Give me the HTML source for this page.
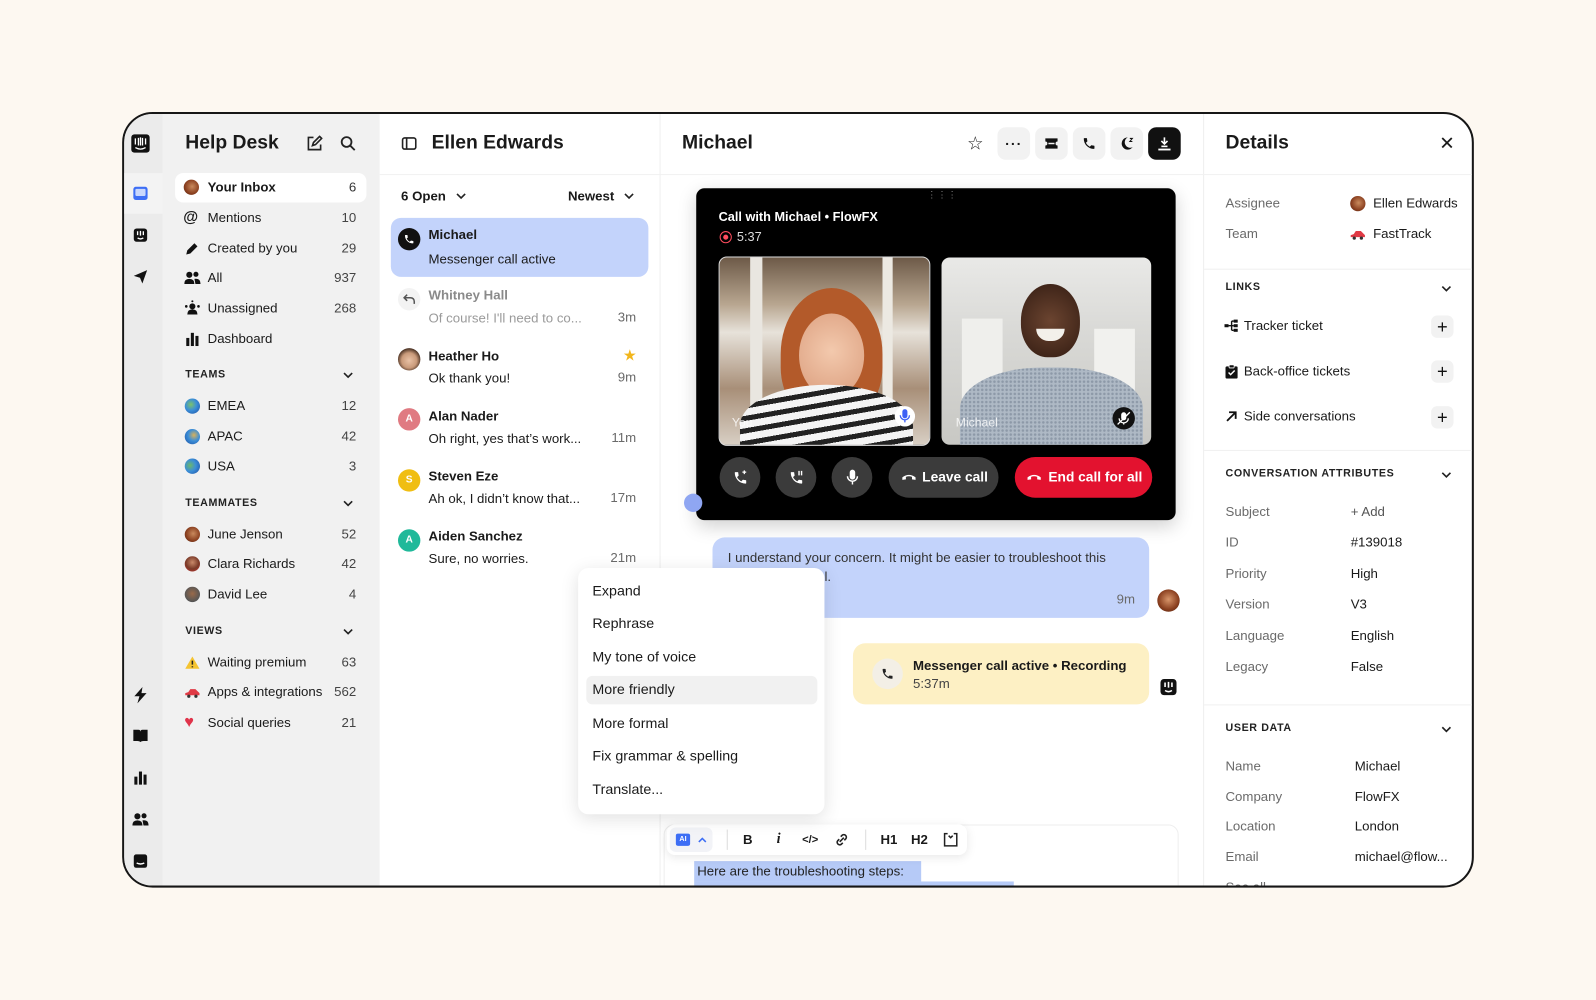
<!DOCTYPE html>
<html><head><meta charset="utf-8">
<style>
*{margin:0;padding:0;box-sizing:border-box}
html,body{width:1596px;height:1000px;overflow:hidden;background:#fdf8f1}
body{font-family:"Liberation Sans",sans-serif;color:#1a1a1a}
#scale{position:absolute;left:0;top:0;width:1568px;height:982px;transform:scale(1.01786);transform-origin:0 0}
#frame{position:absolute;left:120px;top:110px;width:1328px;height:762px;border:2px solid #161616;border-radius:30px;overflow:hidden;background:#fff}
#in{position:absolute;left:-122px;top:-112px;width:1568px;height:982px}
.a{position:absolute}
.t{position:absolute;transform:translateY(-50%);line-height:18px;white-space:nowrap;font-size:13px}
.r{text-align:right}
.b{font-weight:bold}
.g{color:#6a6a6a}
.h{font-size:19px;font-weight:bold}
.sec{font-size:10.5px;font-weight:bold;letter-spacing:.6px;color:#222}
.ic{position:absolute;transform:translate(-50%,-50%)}
.av{position:absolute;border-radius:50%;transform:translate(-50%,-50%)}
.btn{position:absolute;width:32px;height:32px;border-radius:8px;background:#f2f2f2;transform:translate(-50%,-50%);display:flex;align-items:center;justify-content:center}
.circ{position:absolute;width:40px;height:40px;border-radius:50%;background:#3b3b3b;transform:translate(-50%,-50%);display:flex;align-items:center;justify-content:center}
.plus{position:absolute;width:22px;height:22px;border-radius:6px;background:#f2f2f2;transform:translate(-50%,-50%);text-align:center;line-height:22px;font-size:18px;color:#111}
.lt{position:absolute;transform:translate(-50%,-50%);width:22px;height:22px;border-radius:50%;color:#fff;font-size:10px;font-weight:bold;text-align:center;line-height:22px}
</style></head><body>
<div id="scale">
<div id="frame"><div id="in">

<!-- columns -->
<div class="a" style="left:122px;top:112px;width:38px;height:770px;background:#ebebeb"></div>
<div class="a" style="left:122px;top:170px;width:38px;height:40px;background:#f3f3f3"></div>
<div class="a" style="left:160px;top:112px;width:213px;height:770px;background:#f1f1f1"></div>
<div class="a" style="left:648px;top:112px;width:1px;height:770px;background:#efefef"></div>
<div class="a" style="left:1182px;top:112px;width:1px;height:770px;background:#efefef"></div>
<div class="a" style="left:373px;top:171px;width:1075px;height:1px;background:#f1f1f1"></div>

<!-- rail -->
<svg class="ic" style="left:138px;top:141px" width="20" height="20" viewBox="0 0 20 20"><rect x="1" y="1" width="18" height="18" rx="3" fill="#111"/><path d="M5 5v6M8 4.5v7.5M10 4v8M12 4.5v7.5M15 5v6M5 14q5 3 10 0" stroke="#fff" stroke-width="1.3" fill="none"/></svg>
<svg class="ic" style="left:138px;top:190px" width="16" height="16" viewBox="0 0 16 16"><rect x="1" y="1.5" width="14" height="13" rx="2.5" fill="#3d6ef5"/><rect x="3" y="3.5" width="10" height="7" rx="1" fill="#c9d7fc"/></svg>
<svg class="ic" style="left:138px;top:231px" width="15" height="15" viewBox="0 0 16 16"><rect x="1" y="1" width="14" height="14" rx="3" fill="#111"/><path d="M5 4v4M8 3.5v5M11 4v4M5 11q3 2 6 0" stroke="#fff" stroke-width="1.4" fill="none"/></svg>
<svg class="ic" style="left:138px;top:272px" width="15" height="15" viewBox="0 0 16 16"><path d="M1 7L15 1 10 15 7.5 9z" fill="#111"/></svg>
<svg class="ic" style="left:138px;top:683px" width="14" height="16" viewBox="0 0 14 16"><path d="M9 0L1 9h5l-2 7 9-10H8z" fill="#111"/></svg>
<svg class="ic" style="left:138px;top:723px" width="16" height="14" viewBox="0 0 16 14"><path d="M1 1h5q2 0 2 2v10q-1-1-3-1H1zM15 1h-5q-2 0-2 2v10q1-1 3-1h4z" fill="#111"/></svg>
<svg class="ic" style="left:138px;top:764px" width="14" height="14" viewBox="0 0 14 14"><rect x="1" y="6" width="3" height="8" fill="#111"/><rect x="5.5" y="1" width="3" height="13" fill="#111"/><rect x="10" y="4" width="3" height="10" fill="#111"/></svg>
<svg class="ic" style="left:138px;top:805px" width="16" height="14" viewBox="0 0 16 14"><circle cx="5" cy="4" r="3" fill="#111"/><circle cx="11.5" cy="3.5" r="2.5" fill="#111"/><path d="M0 13q0-5 5-5t5 5zM10 8q6-1 6 5h-5z" fill="#111"/></svg>
<svg class="ic" style="left:138px;top:846px" width="15" height="15" viewBox="0 0 16 16"><rect x="1" y="1" width="14" height="14" rx="2.5" fill="#111"/><path d="M4 10q4 2 8 0" stroke="#fff" stroke-width="1.5" fill="none"/></svg>

<!-- sidebar -->
<div class="t h" style="left:182px;top:141px">Help Desk</div>
<svg class="ic" style="left:309px;top:141px" width="16" height="16" viewBox="0 0 16 16" fill="none" stroke="#222" stroke-width="1.6"><path d="M7 2H2v12h12V9"/><path d="M6 10l1-3 6-6 2 2-6 6z"/></svg>
<svg class="ic" style="left:342px;top:141px" width="16" height="16" viewBox="0 0 16 16" fill="none" stroke="#222" stroke-width="1.8"><circle cx="6.5" cy="6.5" r="4.8"/><path d="M10 10l4.5 4.5"/></svg>
<div class="a" style="left:172px;top:170px;width:188px;height:29px;background:#fff;border-radius:8px"></div>
<div class="av" style="left:188px;top:184px;width:15px;height:15px;background:radial-gradient(circle at 55% 45%,#c98a5d 0,#8a3f1f 60%,#4a2010 100%)"></div>
<div class="t b" style="left:204px;top:184px">Your Inbox</div><div class="t r" style="right:1218px;top:184px;color:#333">6</div>
<div class="t" style="left:180px;top:214px;font-size:15px;font-weight:bold">@</div><div class="t" style="left:204px;top:214px">Mentions</div><div class="t r" style="right:1218px;top:214px;color:#444">10</div>
<svg class="ic" style="left:189px;top:244px" width="14" height="14" viewBox="0 0 14 14"><path d="M1 13l1-4 7-7 3 3-7 7z" fill="#111"/></svg><div class="t" style="left:204px;top:244px">Created by you</div><div class="t r" style="right:1218px;top:244px;color:#444">29</div>
<svg class="ic" style="left:189px;top:273px" width="16" height="14" viewBox="0 0 16 14"><circle cx="5" cy="4" r="3" fill="#111"/><circle cx="11.5" cy="3.5" r="2.5" fill="#111"/><path d="M0 13q0-5 5-5t5 5zM10 8q6-1 6 5h-5z" fill="#111"/></svg><div class="t" style="left:204px;top:273px">All</div><div class="t r" style="right:1218px;top:273px;color:#444">937</div>
<svg class="ic" style="left:189px;top:303px" width="16" height="16" viewBox="0 0 16 16"><circle cx="8" cy="6" r="3" fill="#111"/><path d="M3 14q0-5 5-5t5 5z" fill="#111"/><circle cx="2" cy="6" r="1.3" fill="#111"/><circle cx="14" cy="6" r="1.3" fill="#111"/><circle cx="8" cy="1" r="1" fill="#111"/></svg><div class="t" style="left:204px;top:303px">Unassigned</div><div class="t r" style="right:1218px;top:303px;color:#444">268</div>
<svg class="ic" style="left:189px;top:333px" width="14" height="14" viewBox="0 0 14 14"><rect x="1" y="6" width="3" height="8" fill="#111"/><rect x="5.5" y="1" width="3" height="13" fill="#111"/><rect x="10" y="4" width="3" height="10" fill="#111"/></svg><div class="t" style="left:204px;top:333px">Dashboard</div>
<div class="t sec" style="left:182px;top:368px">TEAMS</div><svg class="ic" style="left:342px;top:369px" width="10" height="7" viewBox="0 0 10 7"><path d="M1 1l4 4 4-4" stroke="#222" stroke-width="1.6" fill="none"/></svg>
<div class="av" style="left:189px;top:399px;width:15px;height:15px;background:radial-gradient(circle at 40% 40%,#7cc36a 0,#3b8ed8 45%,#1d4fa0 100%)"></div><div class="t" style="left:204px;top:399px">EMEA</div><div class="t r" style="right:1218px;top:399px;color:#444">12</div>
<div class="av" style="left:189px;top:429px;width:15px;height:15px;background:radial-gradient(circle at 60% 40%,#d9b25a 0,#3b8ed8 45%,#1d4fa0 100%)"></div><div class="t" style="left:204px;top:429px">APAC</div><div class="t r" style="right:1218px;top:429px;color:#444">42</div>
<div class="av" style="left:189px;top:458px;width:15px;height:15px;background:radial-gradient(circle at 35% 45%,#6bb86a 0,#3b8ed8 45%,#1d4fa0 100%)"></div><div class="t" style="left:204px;top:458px">USA</div><div class="t r" style="right:1218px;top:458px;color:#444">3</div>
<div class="t sec" style="left:182px;top:494px">TEAMMATES</div><svg class="ic" style="left:342px;top:495px" width="10" height="7" viewBox="0 0 10 7"><path d="M1 1l4 4 4-4" stroke="#222" stroke-width="1.6" fill="none"/></svg>
<div class="av" style="left:189px;top:525px;width:15px;height:15px;background:radial-gradient(circle at 55% 45%,#c98a5d 0,#8a3f1f 60%,#4a2010 100%)"></div><div class="t" style="left:204px;top:525px">June Jenson</div><div class="t r" style="right:1218px;top:525px;color:#444">52</div>
<div class="av" style="left:189px;top:554px;width:15px;height:15px;background:radial-gradient(circle at 50% 40%,#c9896a 0,#7a3a28 55%,#c33 100%)"></div><div class="t" style="left:204px;top:554px">Clara Richards</div><div class="t r" style="right:1218px;top:554px;color:#444">42</div>
<div class="av" style="left:189px;top:584px;width:15px;height:15px;background:radial-gradient(circle at 50% 45%,#9a6a4a 0,#555 70%)"></div><div class="t" style="left:204px;top:584px">David Lee</div><div class="t r" style="right:1218px;top:584px;color:#444">4</div>
<div class="t sec" style="left:182px;top:620px">VIEWS</div><svg class="ic" style="left:342px;top:621px" width="10" height="7" viewBox="0 0 10 7"><path d="M1 1l4 4 4-4" stroke="#222" stroke-width="1.6" fill="none"/></svg>
<svg class="ic" style="left:189px;top:651px" width="16" height="14" viewBox="0 0 16 14"><path d="M8 1l7 12H1z" fill="#f5c431"/><path d="M8 5v4M8 10.5v1.2" stroke="#222" stroke-width="1.5"/></svg><div class="t" style="left:204px;top:651px">Waiting premium</div><div class="t r" style="right:1218px;top:651px;color:#444">63</div>
<svg class="ic" style="left:189px;top:681px" width="16" height="10" viewBox="0 0 16 10"><path d="M1 7V5l3-1 2-3h5l3 3 1 1v2z" fill="#e03a45"/><circle cx="4.5" cy="8" r="1.6" fill="#333"/><circle cx="11.5" cy="8" r="1.6" fill="#333"/></svg><div class="t" style="left:204px;top:680px">Apps &amp; integrations</div><div class="t r" style="right:1218px;top:680px;color:#444">562</div>
<div class="t" style="left:181px;top:710px;color:#e0334a;font-size:16px">♥</div><div class="t" style="left:204px;top:710px">Social queries</div><div class="t r" style="right:1218px;top:710px;color:#444">21</div>

<!-- list -->
<svg class="ic" style="left:402px;top:141px" width="15" height="13" viewBox="0 0 15 13" fill="none" stroke="#222" stroke-width="1.6"><rect x="1" y="1" width="13" height="11" rx="2"/><path d="M5 1v11"/></svg>
<div class="t h" style="left:424px;top:141px">Ellen Edwards</div>
<div class="t b" style="left:394px;top:193px">6 Open</div><svg class="ic" style="left:453px;top:193px" width="10" height="7" viewBox="0 0 10 7"><path d="M1 1l4 4 4-4" stroke="#222" stroke-width="1.6" fill="none"/></svg>
<div class="t b" style="left:558px;top:193px">Newest</div><svg class="ic" style="left:618px;top:193px" width="10" height="7" viewBox="0 0 10 7"><path d="M1 1l4 4 4-4" stroke="#222" stroke-width="1.6" fill="none"/></svg>
<div class="a" style="left:384px;top:214px;width:253px;height:58px;background:#c3d3fb;border-radius:10px"></div>
<div class="av" style="left:402px;top:235px;width:22px;height:22px;background:#111"></div>
<svg class="ic" style="left:402px;top:235px" width="11" height="11" viewBox="0 0 24 24"><path d="M6.6 10.8a15 15 0 006.6 6.6l2.2-2.2a1 1 0 011-.25 11.4 11.4 0 003.6.6 1 1 0 011 1V20a1 1 0 01-1 1A17 17 0 013 4a1 1 0 011-1h3.5a1 1 0 011 1c0 1.25.2 2.45.57 3.57a1 1 0 01-.25 1z" fill="#fff"/></svg>
<div class="t b" style="left:421px;top:231px">Michael</div><div class="t" style="left:421px;top:255px">Messenger call active</div>
<div class="av" style="left:402px;top:294px;width:22px;height:22px;background:#f3f3f3"></div>
<svg class="ic" style="left:402px;top:294px" width="12" height="11" viewBox="0 0 12 11"><path d="M4 1L1 4l3 3M1 4h6q4 0 4 4v2" stroke="#555" stroke-width="1.5" fill="none"/></svg>
<div class="t b" style="left:421px;top:290px;color:#8a8a8a">Whitney Hall</div><div class="t" style="left:421px;top:313px;color:#9a9a9a">Of course! I'll need to co...</div><div class="t r g" style="right:943px;top:312px">3m</div>
<div class="av" style="left:402px;top:353px;width:22px;height:22px;background:radial-gradient(circle at 50% 55%,#e9c2a6 0,#c99a7a 45%,#3a2418 75%)"></div>
<div class="t b" style="left:421px;top:350px">Heather Ho</div><div class="t" style="left:421px;top:372px">Ok thank you!</div><div class="t r g" style="right:943px;top:371px">9m</div>
<div class="t" style="left:612px;top:350px;color:#f2b61c;font-size:15px">★</div>
<div class="lt" style="left:402px;top:412px;background:#e07a82">A</div>
<div class="t b" style="left:421px;top:409px">Alan Nader</div><div class="t" style="left:421px;top:431px">Oh right, yes that’s work...</div><div class="t r g" style="right:943px;top:430px">11m</div>
<div class="lt" style="left:402px;top:472px;background:#f0be12">S</div>
<div class="t b" style="left:421px;top:468px">Steven Eze</div><div class="t" style="left:421px;top:490px">Ah ok, I didn’t know that...</div><div class="t r g" style="right:943px;top:489px">17m</div>
<div class="lt" style="left:402px;top:531px;background:#20b99a">A</div>
<div class="t b" style="left:421px;top:527px">Aiden Sanchez</div><div class="t" style="left:421px;top:549px">Sure, no worries.</div><div class="t r g" style="right:943px;top:548px">21m</div>

<!-- chat header -->
<div class="t h" style="left:670px;top:141px">Michael</div>
<div class="t" style="left:950px;top:141px;font-size:18px">☆</div>
<div class="btn" style="left:996px;top:141px"><span style="font-size:14px;font-weight:bold;letter-spacing:1px;line-height:8px">···</span></div>
<div class="btn" style="left:1033px;top:141px"><svg width="14" height="12" viewBox="0 0 14 12"><path d="M1 1h12v3a2 2 0 000 4v3H1V8a2 2 0 000-4z" fill="#111"/><path d="M4 6h6" stroke="#f2f2f2" stroke-width="1.5"/></svg></div>
<div class="btn" style="left:1070px;top:141px"><svg width="14" height="14" viewBox="0 0 24 24"><path d="M6.6 10.8a15 15 0 006.6 6.6l2.2-2.2a1 1 0 011-.25 11.4 11.4 0 003.6.6 1 1 0 011 1V20a1 1 0 01-1 1A17 17 0 013 4a1 1 0 011-1h3.5a1 1 0 011 1c0 1.25.2 2.45.57 3.57a1 1 0 01-.25 1z" fill="#111"/></svg></div>
<div class="btn" style="left:1107px;top:141px"><svg width="14" height="14" viewBox="0 0 14 14"><path d="M8 1a6 6 0 104.8 9.6A5 5 0 018 1z" fill="#111"/><path d="M10 2h2.5l-2.5 3h2.5" stroke="#111" stroke-width="1" fill="none"/></svg></div>
<div class="btn" style="left:1144px;top:141px;background:#111"><svg width="14" height="14" viewBox="0 0 14 14"><path d="M7 1v6M4 4.5L7 7.5l3-3" stroke="#fff" stroke-width="1.6" fill="none"/><rect x="4" y="9" width="6" height="1.6" fill="#fff"/><rect x="1" y="12" width="12" height="1.8" fill="#fff"/></svg></div>

<!-- call card -->
<div class="a" style="left:684px;top:185px;width:471px;height:326px;background:#000;border-radius:8px;box-shadow:0 6px 18px rgba(0,0,0,.18)"></div>
<div class="t" style="left:911px;top:191px;color:#888;font-size:9px;letter-spacing:1px">⋮⋮⋮</div>
<div class="t b" style="left:706px;top:213px;color:#fff;font-size:12.5px">Call with Michael • FlowFX</div>
<div class="av" style="left:713px;top:233px;width:12px;height:12px;border:1.6px solid #ff4d5e"></div><div class="av" style="left:713px;top:233px;width:5px;height:5px;background:#ff4d5e"></div>
<div class="t" style="left:724px;top:233px;color:#ddd;font-size:12.5px">5:37</div>
<!-- left video -->
<div class="a" style="left:706px;top:252px;width:208px;height:186px;border-radius:8px;overflow:hidden;background:linear-gradient(180deg,#6d5a48 0,#b8a690 25%,#e7e2da 40%,#a88f78 70%,#d8cfc4 100%);border:1.5px solid #ddd">
 <div class="a" style="left:30px;top:0;width:12px;height:186px;background:#e9e6e0"></div>
 <div class="a" style="left:160px;top:0;width:10px;height:186px;background:#ece9e2"></div>
 <div class="a" style="left:60px;top:30px;width:100px;height:130px;border-radius:50% 50% 40% 40%;background:#b35a2a"></div>
 <div class="a" style="left:78px;top:55px;width:64px;height:82px;border-radius:50%;background:radial-gradient(circle at 50% 45%,#f3c9ad 0,#e1a98a 70%)"></div>
 <div class="a" style="left:20px;top:125px;width:170px;height:80px;border-radius:50% 50% 0 0;background:repeating-linear-gradient(170deg,#f4f4f4 0 7px,#222 7px 12px)"></div>
 <div class="a" style="left:172px;top:146px;width:20px;height:20px;border-radius:50%;background:#fff"></div>
 <svg class="a" style="left:176px;top:149px" width="12" height="14" viewBox="0 0 12 14"><rect x="3.5" y="0" width="5" height="9" rx="2.5" fill="#3d5ff5"/><path d="M1.5 6a4.5 4.5 0 009 0M6 10.5V13" stroke="#3d5ff5" stroke-width="1.3" fill="none"/></svg>
 <div class="t" style="left:12px;top:162px;color:#fff;font-size:12px;opacity:.8">You</div>
</div>
<!-- right video -->
<div class="a" style="left:925px;top:253px;width:206px;height:184px;border-radius:8px;overflow:hidden;background:linear-gradient(180deg,#e9e9e7 0,#d9d9d6 40%,#c8c8c4 100%)">
 <div class="a" style="left:20px;top:60px;width:40px;height:124px;background:#efefec"></div>
 <div class="a" style="left:150px;top:70px;width:40px;height:114px;background:#f1f1ee"></div>
 <div class="a" style="left:78px;top:26px;width:58px;height:72px;border-radius:50% 50% 45% 45%;background:radial-gradient(circle at 50% 50%,#6b4430 0,#3e2418 80%)"></div>
 <div class="a" style="left:93px;top:70px;width:28px;height:12px;border-radius:0 0 14px 14px;background:#f3f0ea"></div>
 <div class="a" style="left:18px;top:108px;width:180px;height:90px;border-radius:45% 45% 0 0;background:radial-gradient(#8d99a8 1px,#aeb9c5 1.5px);background-size:4px 4px"></div>
 <div class="a" style="left:168px;top:147px;width:22px;height:22px;border-radius:50%;background:#111"></div>
 <svg class="a" style="left:172px;top:151px" width="14" height="14" viewBox="0 0 14 14"><rect x="4.5" y="1" width="5" height="8" rx="2.5" fill="#fff"/><path d="M2.5 7a4.5 4.5 0 009 0M7 11.5V13M1 13L13 1" stroke="#fff" stroke-width="1.3" fill="none"/></svg>
 <div class="t" style="left:14px;top:162px;color:#fff;font-size:12px;opacity:.8">Michael</div>
</div>
<div class="circ" style="left:727px;top:469px"><svg width="15" height="15" viewBox="0 0 24 24"><path d="M6.6 10.8a15 15 0 006.6 6.6l2.2-2.2a1 1 0 011-.25 11.4 11.4 0 003.6.6 1 1 0 011 1V20a1 1 0 01-1 1A17 17 0 013 4a1 1 0 011-1h3.5a1 1 0 011 1c0 1.25.2 2.45.57 3.57a1 1 0 01-.25 1z" fill="#fff"/><path d="M15 3l6 0M18 0v6" stroke="#fff" stroke-width="2"/></svg></div>
<div class="circ" style="left:782px;top:469px"><svg width="15" height="15" viewBox="0 0 24 24"><path d="M6.6 10.8a15 15 0 006.6 6.6l2.2-2.2a1 1 0 011-.25 11.4 11.4 0 003.6.6 1 1 0 011 1V20a1 1 0 01-1 1A17 17 0 013 4a1 1 0 011-1h3.5a1 1 0 011 1c0 1.25.2 2.45.57 3.57a1 1 0 01-.25 1z" fill="#fff"/><path d="M16 1v7M20 1v7" stroke="#fff" stroke-width="2.2"/></svg></div>
<div class="circ" style="left:837px;top:469px"><svg width="13" height="16" viewBox="0 0 12 14"><rect x="3.5" y="0" width="5" height="9" rx="2.5" fill="#fff"/><path d="M1.5 6a4.5 4.5 0 009 0M6 10.5V13.5" stroke="#fff" stroke-width="1.3" fill="none"/></svg></div>
<div class="a" style="left:873px;top:449px;width:108px;height:40px;border-radius:20px;background:#3b3b3b"></div>
<svg class="ic" style="left:893px;top:469px" width="15" height="8" viewBox="0 0 15 8"><path d="M1 6.5V4q6.5-5 13 0v2.5l-3.5-.5V3.5q-3-1.3-6 0V6z" fill="#fff"/></svg>
<div class="t b" style="left:906px;top:469px;color:#fff;font-size:13.5px">Leave call</div>
<div class="a" style="left:997px;top:449px;width:135px;height:40px;border-radius:20px;background:#e3122f"></div>
<svg class="ic" style="left:1016px;top:469px" width="15" height="8" viewBox="0 0 15 8"><path d="M1 6.5V4q6.5-5 13 0v2.5l-3.5-.5V3.5q-3-1.3-6 0V6z" fill="#fff"/></svg>
<div class="t b" style="left:1030px;top:469px;color:#fff;font-size:13.5px">End call for all</div>
<div class="av" style="left:681px;top:494px;width:18px;height:18px;background:#8fa6f2"></div>

<!-- messages -->
<div class="a" style="left:700px;top:528px;width:429px;height:79px;background:#c3d3fb;border-radius:12px"></div>
<div class="t" style="left:715px;top:548px;color:#333">I understand your concern. It might be easier to troubleshoot this</div>
<div class="t" style="left:810px;top:567px;color:#333">l.</div>
<div class="t g" style="left:1097px;top:589px">9m</div>
<div class="av" style="left:1148px;top:590px;width:22px;height:22px;background:radial-gradient(circle at 50% 45%,#d8956a 0,#8a3f1f 60%,#4a2010 100%)"></div>
<div class="a" style="left:838px;top:632px;width:291px;height:60px;background:#fdf0c4;border-radius:12px"></div>
<div class="av" style="left:872px;top:662px;width:30px;height:30px;background:#f3efe6"></div>
<svg class="ic" style="left:872px;top:662px" width="13" height="13" viewBox="0 0 24 24"><path d="M6.6 10.8a15 15 0 006.6 6.6l2.2-2.2a1 1 0 011-.25 11.4 11.4 0 003.6.6 1 1 0 011 1V20a1 1 0 01-1 1A17 17 0 013 4a1 1 0 011-1h3.5a1 1 0 011 1c0 1.25.2 2.45.57 3.57a1 1 0 01-.25 1z" fill="#222"/></svg>
<div class="t b" style="left:897px;top:654px">Messenger call active • Recording</div>
<div class="t" style="left:897px;top:672px;color:#444">5:37m</div>
<svg class="ic" style="left:1148px;top:675px" width="18" height="18" viewBox="0 0 16 16"><rect x="1" y="1" width="14" height="14" rx="3" fill="#111"/><path d="M5 4v4M8 3.5v5M11 4v4M5 11q3 2 6 0" stroke="#fff" stroke-width="1.4" fill="none"/></svg>

<!-- composer -->
<div class="a" style="left:652px;top:810px;width:506px;height:80px;border:1px solid #eee;border-radius:10px;background:#fff"></div>
<div class="a" style="left:682px;top:846px;width:223px;height:20px;background:#b6caf7"></div>
<div class="a" style="left:682px;top:866px;width:314px;height:10px;background:#b6caf7"></div>
<div class="t" style="left:685px;top:856px;color:#222">Here are the troubleshooting steps:</div>
<div class="a" style="left:655px;top:810px;width:295px;height:30px;background:#fff;border-radius:8px;box-shadow:0 2px 10px rgba(0,0,0,.1)"></div>
<div class="a" style="left:658px;top:813px;width:42px;height:24px;background:#f2f3f7;border-radius:6px"></div>
<div class="a" style="left:664px;top:819px;width:14px;height:12px;background:#3d6ef5;border-radius:2px;color:#fff;font-size:7px;font-weight:bold;text-align:center;line-height:12px">AI</div>
<svg class="ic" style="left:690px;top:825px" width="9" height="6" viewBox="0 0 10 7"><path d="M1 6l4-4 4 4" stroke="#3d6ef5" stroke-width="1.8" fill="none"/></svg>
<div class="a" style="left:714px;top:815px;width:1px;height:20px;background:#ddd"></div>
<div class="a" style="left:850px;top:815px;width:1px;height:20px;background:#ddd"></div>
<div class="t b" style="left:730px;top:825px">B</div>
<div class="t b" style="left:763px;top:825px;font-style:italic;font-family:'Liberation Serif',serif;font-size:14px">i</div>
<div class="t b" style="left:788px;top:825px;font-size:11px">&lt;/&gt;</div>
<svg class="ic" style="left:827px;top:825px" width="14" height="14" viewBox="0 0 14 14" fill="none" stroke="#222" stroke-width="1.6"><path d="M6 4l1.5-1.5a2.5 2.5 0 013.5 3.5L9.5 7.5M8 10l-1.5 1.5A2.5 2.5 0 013 8l1.5-1.5M5 9l4-4"/></svg>
<div class="t b" style="left:865px;top:825px">H1</div>
<div class="t b" style="left:895px;top:825px">H2</div>
<svg class="ic" style="left:934px;top:825px" width="14" height="14" viewBox="0 0 14 14" fill="none" stroke="#222" stroke-width="1.5"><path d="M4 1H1v12h12V1h-3M5 3l2 2 2-2"/></svg>

<!-- AI menu -->
<div class="a" style="left:568px;top:558px;width:242px;height:242px;background:#fff;border-radius:10px;box-shadow:0 4px 18px rgba(0,0,0,.12)"></div>
<div class="a" style="left:576px;top:664px;width:227px;height:28px;background:#f1f1f1;border-radius:6px"></div>
<div class="t" style="left:582px;top:580px;font-size:14px">Expand</div>
<div class="t" style="left:582px;top:612px;font-size:14px">Rephrase</div>
<div class="t" style="left:582px;top:645px;font-size:14px">My tone of voice</div>
<div class="t" style="left:582px;top:677px;font-size:14px">More friendly</div>
<div class="t" style="left:582px;top:710px;font-size:14px">More formal</div>
<div class="t" style="left:582px;top:742px;font-size:14px">Fix grammar &amp; spelling</div>
<div class="t" style="left:582px;top:775px;font-size:14px">Translate...</div>

<!-- details -->
<div class="t h" style="left:1204px;top:141px">Details</div>
<div class="t" style="left:1414px;top:141px;font-size:18px">✕</div>
<div class="t g" style="left:1204px;top:200px">Assignee</div>
<div class="av" style="left:1334px;top:200px;width:15px;height:15px;background:radial-gradient(circle at 55% 45%,#c98a5d 0,#8a3f1f 60%,#4a2010 100%)"></div>
<div class="t" style="left:1349px;top:200px">Ellen Edwards</div>
<div class="t g" style="left:1204px;top:230px">Team</div>
<svg class="ic" style="left:1334px;top:231px" width="16" height="10" viewBox="0 0 16 10"><path d="M1 7V5l3-1 2-3h5l3 3 1 1v2z" fill="#e03a45"/><circle cx="4.5" cy="8" r="1.6" fill="#333"/><circle cx="11.5" cy="8" r="1.6" fill="#333"/></svg>
<div class="t" style="left:1349px;top:230px">FastTrack</div>
<div class="a" style="left:1183px;top:264px;width:265px;height:1px;background:#f0f0f0"></div>
<div class="t sec" style="left:1204px;top:282px">LINKS</div><svg class="ic" style="left:1421px;top:284px" width="10" height="7" viewBox="0 0 10 7"><path d="M1 1l4 4 4-4" stroke="#222" stroke-width="1.6" fill="none"/></svg>
<svg class="ic" style="left:1210px;top:320px" width="14" height="13" viewBox="0 0 14 13"><rect x="0" y="5" width="4" height="3" fill="#111"/><path d="M4 6.5h3M7 2v9M7 2h2M7 6.5h2M7 11h2" stroke="#111" stroke-width="1.4"/><rect x="9" y="0.5" width="4" height="3" fill="#111"/><rect x="9" y="5" width="4" height="3" fill="#111"/><rect x="9" y="9.5" width="4" height="3" fill="#111"/></svg>
<div class="t" style="left:1222px;top:320px">Tracker ticket</div><div class="plus" style="left:1417px;top:321px">+</div>
<svg class="ic" style="left:1210px;top:365px" width="12" height="14" viewBox="0 0 12 14"><rect x="0" y="2" width="12" height="12" rx="1.5" fill="#111"/><rect x="3.5" y="0.5" width="5" height="3" rx="1" fill="#111" stroke="#fff" stroke-width=".8"/><path d="M3 8l2 2 4-4" stroke="#fff" stroke-width="1.4" fill="none"/></svg>
<div class="t" style="left:1222px;top:365px">Back-office tickets</div><div class="plus" style="left:1417px;top:365px">+</div>
<svg class="ic" style="left:1210px;top:409px" width="11" height="11" viewBox="0 0 11 11"><path d="M1 10L9.5 1.5M3 1.5h6.5V8" stroke="#111" stroke-width="1.8" fill="none"/></svg>
<div class="t" style="left:1222px;top:409px">Side conversations</div><div class="plus" style="left:1417px;top:410px">+</div>
<div class="a" style="left:1183px;top:442px;width:265px;height:1px;background:#f0f0f0"></div>
<div class="t sec" style="left:1204px;top:465px">CONVERSATION ATTRIBUTES</div><svg class="ic" style="left:1421px;top:467px" width="10" height="7" viewBox="0 0 10 7"><path d="M1 1l4 4 4-4" stroke="#222" stroke-width="1.6" fill="none"/></svg>
<div class="t g" style="left:1204px;top:503px">Subject</div><div class="t" style="left:1327px;top:503px;color:#555">+ Add</div>
<div class="t g" style="left:1204px;top:533px">ID</div><div class="t" style="left:1327px;top:533px">#139018</div>
<div class="t g" style="left:1204px;top:564px">Priority</div><div class="t" style="left:1327px;top:564px">High</div>
<div class="t g" style="left:1204px;top:594px">Version</div><div class="t" style="left:1327px;top:594px">V3</div>
<div class="t g" style="left:1204px;top:625px">Language</div><div class="t" style="left:1327px;top:625px">English</div>
<div class="t g" style="left:1204px;top:655px">Legacy</div><div class="t" style="left:1327px;top:655px">False</div>
<div class="a" style="left:1183px;top:692px;width:265px;height:1px;background:#f0f0f0"></div>
<div class="t sec" style="left:1204px;top:715px">USER DATA</div><svg class="ic" style="left:1421px;top:717px" width="10" height="7" viewBox="0 0 10 7"><path d="M1 1l4 4 4-4" stroke="#222" stroke-width="1.6" fill="none"/></svg>
<div class="t g" style="left:1204px;top:753px">Name</div><div class="t" style="left:1331px;top:753px">Michael</div>
<div class="t g" style="left:1204px;top:783px">Company</div><div class="t" style="left:1331px;top:783px">FlowFX</div>
<div class="t g" style="left:1204px;top:812px">Location</div><div class="t" style="left:1331px;top:812px">London</div>
<div class="t g" style="left:1204px;top:842px">Email</div><div class="t" style="left:1331px;top:842px">michael@flow...</div>
<div class="t g" style="left:1204px;top:872px">See all</div>

</div></div>
</div>
</body></html>
